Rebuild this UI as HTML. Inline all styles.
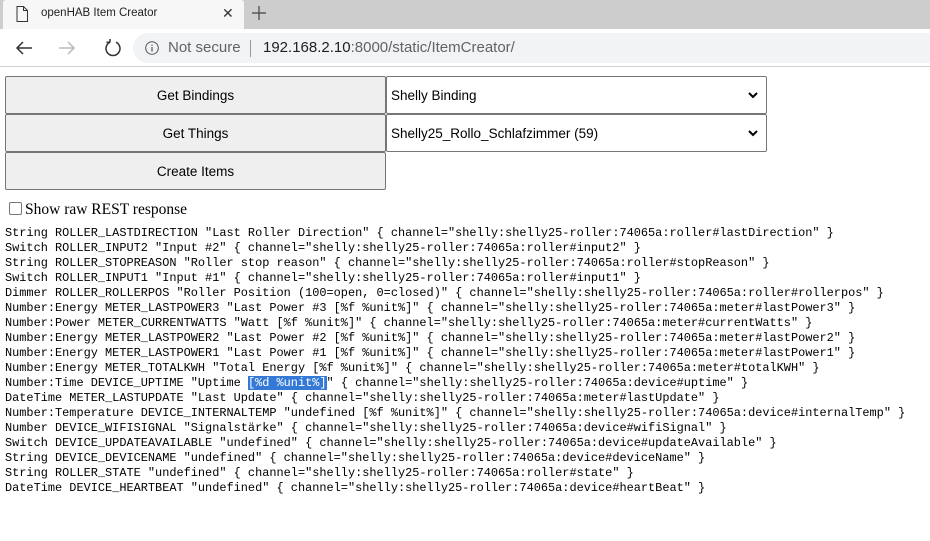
<!DOCTYPE html>
<html><head><meta charset="utf-8"><style>
*{box-sizing:border-box}
body{margin:0;width:930px;height:541px;overflow:hidden;background:#fff;font-family:"Liberation Sans",sans-serif;position:relative}
.tabs{position:absolute;left:0;top:0;width:930px;height:29px;background:#cdcdcd}
.tab{position:absolute;left:3px;top:0;width:241px;height:29px;background:#f7f7f7;border-radius:3px 3px 0 0}
.tb{position:absolute;left:0;top:29px;width:930px;height:38px;background:#fff;border-bottom:1px solid #d0d0d0}
.addr{position:absolute;left:133px;top:4px;width:797px;height:30px;background:#f1f3f4;border-radius:15px 0 0 15px}
.btn{position:absolute;left:5px;width:381px;height:38px;background:#efefef;border:1px solid #767676;border-radius:2px;font-size:13.5px;color:#000;display:flex;align-items:center;justify-content:center}
.sel{position:absolute;left:386px;width:381px;height:38px;background:#fff;border:1px solid #767676;border-radius:2px;font-size:13.5px;padding-left:4px;display:flex;align-items:center}
.sel svg{position:absolute;right:8px;top:15px}
pre{position:absolute;left:5px;top:226px;margin:0;font-family:"Liberation Mono",monospace;font-size:11.92px;line-height:15px;color:#000}
.hl{background:#3479d6;color:#fff}
</style></head><body>
<div class="tabs"><div class="tab">
<svg style="position:absolute;left:13px;top:6px" width="12" height="16" viewBox="0 0 12 16"><path d="M1 .5h6.5l4 4v11H1z M7.5 .5v4h4" fill="none" stroke="#333"/></svg>
<span style="position:absolute;left:38px;top:7px;font-size:11.5px;color:#222">openHAB Item Creator</span>
<span style="position:absolute;left:219px;top:5px;font-size:14px;color:#333">✕</span>
</div>
<svg style="position:absolute;left:252px;top:6px" width="14" height="14"><path d="M7 0v14M0 7h14" stroke="#444" stroke-width="1.2"/></svg>
</div>
<div class="tb">
<svg style="position:absolute;left:15px;top:11px" width="18" height="16"><path d="M17 8H2M8 2L2 8l6 6" fill="none" stroke="#333" stroke-width="1.5"/></svg>
<svg style="position:absolute;left:58px;top:11px" width="18" height="16"><path d="M1 8h15M10 2l6 6-6 6" fill="none" stroke="#bbb" stroke-width="1.5"/></svg>
<svg style="position:absolute;left:104px;top:10px" width="18" height="18"><path d="M6 3.2A7 7 0 1 0 12 3.2M6 3.2V0M6 3.2H2.5" fill="none" stroke="#333" stroke-width="1.5"/></svg>
<div class="addr">
<svg style="position:absolute;left:12px;top:8px" width="14" height="14"><circle cx="7" cy="7" r="6.3" fill="none" stroke="#555"/><path d="M7 6v4.5M7 3.5v1.2" stroke="#555" stroke-width="1.2"/></svg>
<span style="position:absolute;left:35px;top:6px;font-size:15px;color:#5f6368">Not secure</span>
<span style="position:absolute;left:117px;top:7px;width:1px;height:17px;background:#999"></span>
<span style="position:absolute;left:130px;top:6px;font-size:15px;color:#202124">192.168.2.10<span style="color:#5f6368">:8000/static/ItemCreator/</span></span>
</div></div>
<div class="btn" style="top:76px">Get Bindings</div>
<div class="btn" style="top:114px">Get Things</div>
<div class="btn" style="top:152px">Create Items</div>
<div class="sel" style="top:76px">Shelly Binding<svg width="10" height="7"><path d="M1 1l4 4 4-4" fill="none" stroke="#000" stroke-width="2"/></svg></div>
<div class="sel" style="top:114px">Shelly25_Rollo_Schlafzimmer (59)<svg width="10" height="7"><path d="M1 1l4 4 4-4" fill="none" stroke="#000" stroke-width="2"/></svg></div>
<div style="position:absolute;left:9px;top:202px;width:13px;height:13px;border:1px solid #767676;border-radius:2px"></div>
<div style="position:absolute;left:25px;top:201px;font-family:'Liberation Serif',serif;font-size:15.5px">Show raw REST response</div>
<pre>String ROLLER_LASTDIRECTION "Last Roller Direction" { channel="shelly:shelly25-roller:74065a:roller#lastDirection" }
Switch ROLLER_INPUT2 "Input #2" { channel="shelly:shelly25-roller:74065a:roller#input2" }
String ROLLER_STOPREASON "Roller stop reason" { channel="shelly:shelly25-roller:74065a:roller#stopReason" }
Switch ROLLER_INPUT1 "Input #1" { channel="shelly:shelly25-roller:74065a:roller#input1" }
Dimmer ROLLER_ROLLERPOS "Roller Position (100=open, 0=closed)" { channel="shelly:shelly25-roller:74065a:roller#rollerpos" }
Number:Energy METER_LASTPOWER3 "Last Power #3 [%f %unit%]" { channel="shelly:shelly25-roller:74065a:meter#lastPower3" }
Number:Power METER_CURRENTWATTS "Watt [%f %unit%]" { channel="shelly:shelly25-roller:74065a:meter#currentWatts" }
Number:Energy METER_LASTPOWER2 "Last Power #2 [%f %unit%]" { channel="shelly:shelly25-roller:74065a:meter#lastPower2" }
Number:Energy METER_LASTPOWER1 "Last Power #1 [%f %unit%]" { channel="shelly:shelly25-roller:74065a:meter#lastPower1" }
Number:Energy METER_TOTALKWH "Total Energy [%f %unit%]" { channel="shelly:shelly25-roller:74065a:meter#totalKWH" }
Number:Time DEVICE_UPTIME "Uptime <span class="hl">[%d %unit%]</span>" { channel="shelly:shelly25-roller:74065a:device#uptime" }
DateTime METER_LASTUPDATE "Last Update" { channel="shelly:shelly25-roller:74065a:meter#lastUpdate" }
Number:Temperature DEVICE_INTERNALTEMP "undefined [%f %unit%]" { channel="shelly:shelly25-roller:74065a:device#internalTemp" }
Number DEVICE_WIFISIGNAL "Signalstärke" { channel="shelly:shelly25-roller:74065a:device#wifiSignal" }
Switch DEVICE_UPDATEAVAILABLE "undefined" { channel="shelly:shelly25-roller:74065a:device#updateAvailable" }
String DEVICE_DEVICENAME "undefined" { channel="shelly:shelly25-roller:74065a:device#deviceName" }
String ROLLER_STATE "undefined" { channel="shelly:shelly25-roller:74065a:roller#state" }
DateTime DEVICE_HEARTBEAT "undefined" { channel="shelly:shelly25-roller:74065a:device#heartBeat" }</pre>
</body></html>
